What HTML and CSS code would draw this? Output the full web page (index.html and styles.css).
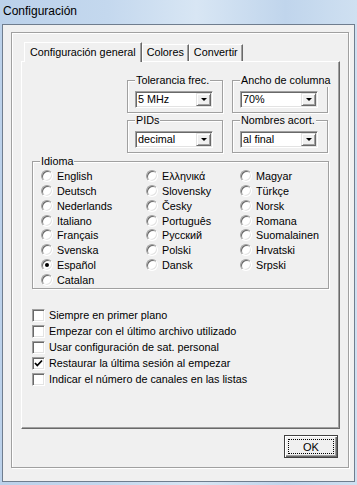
FILE: index.html
```html
<!DOCTYPE html>
<html lang="es">
<head>
    <meta charset="UTF-8">
    <meta name="viewport" content="width=device-width, initial-scale=1.0">
    <title>Configuración</title>
    <link rel="stylesheet" href="styles.css">
</head>

<body>
    <div class="titlebar">Configuración</div>
    <div class="window">
        <div class="panel">
            <div class="tabs">
                <div class="tab active">Configuración general</div>
                <div class="tab">Colores</div>
                <div class="tab">Convertir</div>
            </div>
            <div class="page">
                <div class="top-groups">
                    <fieldset class="group">
                        <legend>Tolerancia frec.</legend>
                        <div class="combo"><span class="value">5 MHz</span><span class="drop"></span></div>
                    </fieldset>
                    <fieldset class="group">
                        <legend>Ancho de columna</legend>
                        <div class="combo"><span class="value">70%</span><span class="drop"></span></div>
                    </fieldset>
                    <fieldset class="group">
                        <legend>PIDs</legend>
                        <div class="combo"><span class="value">decimal</span><span class="drop"></span></div>
                    </fieldset>
                    <fieldset class="group">
                        <legend>Nombres acort.</legend>
                        <div class="combo"><span class="value">al final</span><span class="drop"></span></div>
                    </fieldset>
                </div>

                <fieldset class="group lang">
                    <legend>Idioma</legend>
                    <div class="lang-cols">
                        <div class="col col-1">
                            <div class="option"><span class="radio"></span>English</div>
                            <div class="option"><span class="radio"></span>Deutsch</div>
                            <div class="option"><span class="radio"></span>Nederlands</div>
                            <div class="option"><span class="radio"></span>Italiano</div>
                            <div class="option"><span class="radio"></span>Français</div>
                            <div class="option"><span class="radio"></span>Svenska</div>
                            <div class="option"><span class="radio checked"></span>Español</div>
                            <div class="option"><span class="radio"></span>Catalan</div>
                        </div>
                        <div class="col col-2">
                            <div class="option"><span class="radio"></span>Ελληνικά</div>
                            <div class="option"><span class="radio"></span>Slovensky</div>
                            <div class="option"><span class="radio"></span>Česky</div>
                            <div class="option"><span class="radio"></span>Português</div>
                            <div class="option"><span class="radio"></span>Русский</div>
                            <div class="option"><span class="radio"></span>Polski</div>
                            <div class="option"><span class="radio"></span>Dansk</div>
                        </div>
                        <div class="col col-3">
                            <div class="option"><span class="radio"></span>Magyar</div>
                            <div class="option"><span class="radio"></span>Türkçe</div>
                            <div class="option"><span class="radio"></span>Norsk</div>
                            <div class="option"><span class="radio"></span>Romana</div>
                            <div class="option"><span class="radio"></span>Suomalainen</div>
                            <div class="option"><span class="radio"></span>Hrvatski</div>
                            <div class="option"><span class="radio"></span>Srpski</div>
                        </div>
                    </div>
                </fieldset>

                <div class="checks">
                    <div class="check-row"><span class="checkbox"></span>Siempre en primer plano</div>
                    <div class="check-row"><span class="checkbox"></span>Empezar con el último archivo utilizado</div>
                    <div class="check-row"><span class="checkbox"></span>Usar configuración de sat. personal</div>
                    <div class="check-row">
                        <span class="checkbox">
                            <svg width="9" height="9" viewBox="0 0 9 9"><path d="M1 4 L3.3 6.5 L8 1.5" fill="none" stroke="#000" stroke-width="1.8"/></svg>
                        </span>Restaurar la última sesión al empezar
                    </div>
                    <div class="check-row"><span class="checkbox"></span>Indicar el número de canales en las listas</div>
                </div>
            </div>
            <div class="buttons">
                <button class="ok"><span class="focus">OK</span></button>
            </div>
        </div>
    </div>
</body>
</html>
```

FILE: styles.css
```css
*{
    box-sizing: border-box;
}
body{
    margin: 0;
    width: 357px;
    height: 485px;
    overflow: hidden;
    font-family: "Liberation Sans", Arial, sans-serif;
    font-size: 10.8px;
    color: #000;
    background: linear-gradient(to right, #bbd1ea 0%, #c4d8ee 30%, #d8e6f4 55%, #c0d5ec 80%, #cfe0f1 100%);
}
.titlebar{
    height: 24px;
    padding-left: 3px;
    line-height: 22px;
    font-size: 12px;
}
.window{
    margin: 0 2px;
    height: 458px;
    border: 1px solid #6f7d8e;
    background: #f0f0f0;
    padding: 7px 5px 0 8px;
}
.panel{
    height: 436px;
    border: 1px solid #a0a0a0;
    box-shadow: inset 1px 1px 0 #fff, 1px 1px 0 #fff;
    padding: 9px 8px 0 9px;
}

/* tabs */
.tabs{
    display: flex;
    align-items: flex-end;
    height: 20px;
    padding-left: 3px;
    margin-bottom: -1px;
    position: relative;
    z-index: 1;
}
.tab{
    height: 17px;
    margin-bottom: 1px;
    padding: 0 4px;
    line-height: 15px;
    border: 1px solid;
    border-color: #fff #696969 transparent #fff;
    border-bottom: none;
    box-shadow: inset -1px 0 0 #a0a0a0;
    background: #f0f0f0;
    white-space: nowrap;
}
.tab.active{
    height: 20px;
    margin-bottom: 0;
    padding: 0 5px;
    line-height: 18px;
}
.page{
    height: 368px;
    border: 1px solid;
    border-color: #fff #696969 #696969 #fff;
    box-shadow: inset -1px -1px 0 #a0a0a0;
}

/* group boxes */
.group{
    margin: 0;
    min-width: 0;
    padding: 4px 4px 4px 7px;
    border: 1px solid #a0a0a0;
    box-shadow: inset 1px 1px 0 #fff, 1px 1px 0 #fff;
}
.group legend{
    padding: 0 1px;
    line-height: 13px;
    white-space: nowrap;
    background: #f0f0f0;
}
.top-groups{
    display: grid;
    grid-template-columns: 96px 96px;
    column-gap: 9px;
    row-gap: 1px;
    margin: 12px 0 0 105px;
}
.combo{
    display: flex;
    width: 78px;
    height: 17px;
    padding: 1px;
    background: #fff;
    border: 1px solid;
    border-color: #a0a0a0 #fff #fff #a0a0a0;
    box-shadow: inset 1px 1px 0 #696969, inset -1px -1px 0 #e3e3e3;
}
.combo .value{
    flex: 1;
    padding-left: 1px;
    line-height: 13px;
}
.drop{
    display: flex;
    align-items: center;
    justify-content: center;
    width: 15px;
    height: 13px;
    background: #f0f0f0;
    border: 1px solid;
    border-color: #e3e3e3 #696969 #696969 #e3e3e3;
    box-shadow: inset 1px 1px 0 #fff, inset -1px -1px 0 #a0a0a0;
}
.drop::after{
    content: "";
    border-left: 3px solid transparent;
    border-right: 3px solid transparent;
    border-top: 3px solid #000;
}

/* language */
.lang{
    width: 297px;
    margin: 2px 0 0 10px;
    padding: 1px 0 1px 8px;
}
.lang legend{
    margin-left: -1px;
}
.lang-cols{
    display: flex;
}
.col{
    display: flex;
    flex-direction: column;
}
.col-1{ width: 105px; }
.col-2{ width: 94px; }
.option{
    display: flex;
    align-items: center;
    gap: 4px;
    height: 14.75px;
    white-space: nowrap;
}
.radio{
    position: relative;
    width: 12px;
    height: 12px;
    border-radius: 50%;
    background: #fff;
    border: 1px solid;
    border-color: #a0a0a0 #fff #fff #a0a0a0;
    box-shadow: inset 1px 1px 0 #696969, inset -1px -1px 0 #e3e3e3;
}
.radio.checked::after{
    content: "";
    position: absolute;
    left: 3px;
    top: 3px;
    width: 4px;
    height: 4px;
    border-radius: 50%;
    background: #000;
}

/* checkboxes */
.checks{
    margin: 18px 0 0 10px;
}
.check-row{
    display: flex;
    align-items: center;
    gap: 4px;
    height: 16px;
    white-space: nowrap;
}
.checkbox{
    display: flex;
    align-items: center;
    justify-content: center;
    width: 13px;
    height: 13px;
    background: #fff;
    border: 1px solid;
    border-color: #a0a0a0 #fff #fff #a0a0a0;
    box-shadow: inset 1px 1px 0 #696969, inset -1px -1px 0 #e3e3e3;
}

/* button */
.buttons{
    display: flex;
    justify-content: flex-end;
    margin-top: 6px;
    padding-right: 2px;
}
.ok{
    width: 54px;
    height: 23px;
    padding: 3px;
    font-family: "Liberation Sans", Arial, sans-serif;
    font-size: 11px;
    color: #000;
    background: #f0f0f0;
    border: 1px solid #404040;
    box-shadow: inset 1px 1px 0 #fff, inset -1px -1px 0 #696969, inset -2px -2px 0 #a0a0a0;
}
.ok .focus{
    display: flex;
    align-items: center;
    justify-content: center;
    height: 100%;
    border: 1px dotted #000;
}
```
